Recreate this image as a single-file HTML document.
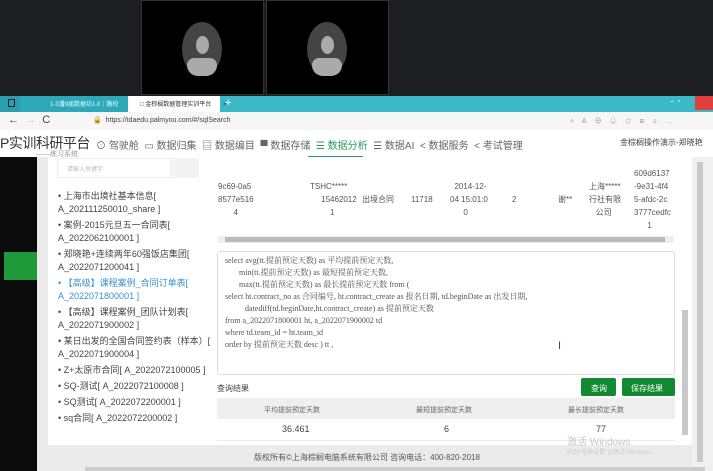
<!DOCTYPE html>
<html><head><meta charset="utf-8"><style>
*{margin:0;padding:0;box-sizing:border-box}
body{width:713px;height:471px;overflow:hidden;background:#1d1e21;font-family:"Liberation Sans","Noto Sans CJK SC",sans-serif;position:relative;color:#555}
.a{position:absolute}
.tile{background:#000;border:1px solid #333}
.ov{background:#444;border-radius:50%}
.t{font-size:9px;white-space:nowrap}
</style></head><body>
<div class="a" style="left:0;top:0;width:713px;height:96px;background:#1d1e21"></div>
<div class="a tile" style="left:141px;top:0;width:123px;height:95px"></div>
<div class="a tile" style="left:266px;top:0;width:123px;height:95px"></div>
<div class="a ov" style="left:182px;top:22px;width:40px;height:54px"></div>
<div class="a" style="left:196px;top:36px;width:13px;height:18px;border-radius:50%;background:#aaa"></div>
<div class="a" style="left:187px;top:58px;width:30px;height:18px;border-radius:10px 10px 15px 15px;background:#aaa"></div>
<div class="a ov" style="left:307px;top:22px;width:40px;height:54px"></div>
<div class="a" style="left:321px;top:36px;width:13px;height:18px;border-radius:50%;background:#aaa"></div>
<div class="a" style="left:312px;top:58px;width:30px;height:18px;border-radius:10px 10px 15px 15px;background:#aaa"></div>

<!-- tab bar -->
<div class="a" style="left:0;top:96px;width:713px;height:16px;background:#3bb9c6"></div>
<div class="a" style="left:0;top:96px;width:20px;height:16px;background:#2a9fb0"></div>
<div class="a" style="left:8px;top:99px;width:7px;height:8px;border:1px solid #222"></div>
<div class="a" style="left:20px;top:96px;width:108px;height:16px;background:#2ea9ba"></div>
<div class="a t" style="left:50px;top:99px;font-size:6px;color:#dff">1-3潘9届数据坊1.0｜路校</div>
<div class="a" style="left:128px;top:96px;width:92px;height:16px;background:#fff"></div>
<div class="a t" style="left:140px;top:99px;font-size:6px;color:#333">□ 金棕榈数据管理实训平台 &nbsp;&nbsp;&nbsp;&nbsp;&nbsp;&nbsp;×</div>
<div class="a t" style="left:225px;top:97px;font-size:11px;color:#fff">+</div>
<div class="a" style="left:695px;top:96px;width:18px;height:14px;background:#e04040"></div>
<div class="a t" style="left:670px;top:98px;font-size:7px;color:#fff">–&nbsp;&nbsp;▫</div>
<!-- address -->
<div class="a" style="left:0;top:112px;width:713px;height:18px;background:#f6f6f6"></div>
<div class="a t" style="left:8px;top:114px;font-size:11px;color:#444">←&nbsp;&nbsp;<span style="color:#ccc">→</span>&nbsp;&nbsp;C</div>
<div class="a t" style="left:93px;top:116px;font-size:7px;color:#444">🔒&nbsp;&nbsp;https://tdaedu.palmyou.com/#/sqlSearch</div>
<div class="a t" style="left:570px;top:116px;font-size:7px;color:#999;letter-spacing:8px">⌕A⊕♧☆⊞♙…</div>
<!-- nav -->
<div class="a" style="left:0;top:130px;width:713px;height:27px;background:#fff"></div>
<div class="a t" style="left:0;top:133px;font-size:14px;color:#333;letter-spacing:-0.5px">P实训科研平台</div>
<div class="a t" style="left:36px;top:149px;font-size:7px;color:#999">——练习系统</div>
<div class="a t" style="left:96px;top:137px;font-size:10px;color:#666;letter-spacing:0px">⊙ 驾驶舱 &nbsp;▭ 数据归集 &nbsp;▤ 数据编目 &nbsp;▀ 数据存储 &nbsp;<span style="color:#2a9d5a">☰ 数据分析</span> &nbsp;☰ 数据AI &nbsp;&lt; 数据服务 &nbsp;&lt; 考试管理</div>
<div class="a" style="left:308px;top:156px;width:55px;height:2px;background:#2a9d5a"></div>
<div class="a t" style="left:620px;top:137px;font-size:8px;color:#444">金棕榈操作演示-郑晓艳</div>

<!-- body -->
<div class="a" style="left:0;top:157px;width:37px;height:314px;background:#0b0b0b"></div>
<div class="a" style="left:4px;top:252px;width:33px;height:28px;background:#1f9a3a"></div>
<div class="a" style="left:37px;top:157px;width:676px;height:314px;background:#ebebeb"></div>
<div class="a" style="left:48px;top:157px;width:644px;height:288px;background:#fff"></div>
<div class="a" style="left:692px;top:157px;width:21px;height:314px;background:#f0f0f0"></div>
<div class="a" style="left:697px;top:162px;width:6px;height:300px;background:#c8c8c8"></div>
<div class="a" style="left:682px;top:310px;width:6px;height:125px;background:#c8c8c8"></div>

<!-- sidebar -->
<div class="a" style="left:57px;top:158px;width:114px;height:20px;border:1px solid #eee"></div>
<div class="a" style="left:171px;top:158px;width:28px;height:20px;background:#f3f3f3"></div>
<div class="a t" style="left:67px;top:164px;font-size:6px;color:#bbb">请输入关键字</div>
<div class="a" style="left:58px;top:190px;font-size:9px;line-height:13px;color:#444;white-space:nowrap">
<div style="margin-bottom:3px">• 上海市出境社基本信息[<br>A_202111250010_share ]</div>
<div style="margin-bottom:3px">• 案例-2015元旦五一合同表[<br>A_2022062100001 ]</div>
<div style="margin-bottom:3px">• 郑晓艳+连续两年60强饭店集团[<br>A_2022071200041 ]</div>
<div style="margin-bottom:3px;color:#3a8fd0">• 【高级】课程案例_合同订单表[<br>A_2022071800001 ]</div>
<div style="margin-bottom:3px">• 【高级】课程案例_团队计划表[<br>A_2022071900002 ]</div>
<div style="margin-bottom:3px">• 某日出发的全国合同签约表（样本）[<br>A_2022071900004 ]</div>
<div style="margin-bottom:3px">• Z+太原市合同[ A_2022072100005 ]</div>
<div style="margin-bottom:3px">• SQ-测试[ A_2022072100008 ]</div>
<div style="margin-bottom:3px">• SQ测试[ A_2022072200001 ]</div>
<div>• sq合同[ A_2022072200002 ]</div>
</div>

<!-- data table -->
<div class="a" style="left:218px;top:180px;font-size:8px;line-height:13px;color:#555">
<div class="a t" style="left:0;top:0;font-size:8px">9c69-0a5<br>8577e516<br>&nbsp;&nbsp;&nbsp;&nbsp;&nbsp;&nbsp;&nbsp;4</div>
<div class="a t" style="left:92px;top:0;font-size:8px">TSHC*****<br>&nbsp;&nbsp;&nbsp;&nbsp;&nbsp;15462012<br>&nbsp;&nbsp;&nbsp;&nbsp;&nbsp;&nbsp;&nbsp;&nbsp;&nbsp;1</div>
<div class="a t" style="left:144px;top:13px;font-size:8px">出境合同</div>
<div class="a t" style="left:193px;top:13px;font-size:8px">11718</div>
<div class="a t" style="left:232px;top:0;font-size:8px">&nbsp;&nbsp;2014-12-<br>04 15:01:0<br>&nbsp;&nbsp;&nbsp;&nbsp;&nbsp;&nbsp;0</div>
<div class="a t" style="left:294px;top:13px;font-size:8px">2</div>
<div class="a t" style="left:340px;top:13px;font-size:8px">谢**</div>
<div class="a t" style="left:371px;top:0;font-size:8px">上海*****<br>行社有限<br>&nbsp;&nbsp;&nbsp;公司</div>
<div class="a t" style="left:416px;top:-13px;font-size:8px">609d6137<br>-9e31-4f4<br>5-afdc-2c<br>3777cedfc<br>&nbsp;&nbsp;&nbsp;&nbsp;&nbsp;&nbsp;1</div>
</div>
<div class="a" style="left:218px;top:236px;width:456px;height:7px;background:#eee"></div>
<div class="a" style="left:225px;top:237px;width:440px;height:5px;background:#bbb"></div>

<!-- sql -->
<div class="a" style="left:217px;top:251px;width:458px;height:124px;border:1px solid #ddd;border-radius:3px"></div>
<div class="a" style="left:225px;top:255px;font-size:8px;line-height:12px;color:#555;font-family:'Liberation Serif','Noto Serif CJK SC',serif;white-space:pre">select avg(tt.提前预定天数) as 平均提前预定天数,
       min(tt.提前预定天数) as 最短提前预定天数,
       max(tt.提前预定天数) as 最长提前预定天数 from (
select ht.contract_no as 合同编号, ht.contract_create as 报名日期, td.beginDate as 出发日期,
          datediff(td.beginDate,ht.contract_create) as 提前预定天数
from a_2022071800001 ht, a_2022071900002 td
where td.team_id = ht.team_id
order by 提前预定天数 desc ) tt ,</div>
<div class="a t" style="left:558px;top:340px;font-size:11px;color:#444">I</div>
<div class="a t" style="left:217px;top:383px;font-size:8px;color:#444">查询结果</div>
<div class="a" style="left:581px;top:378px;width:35px;height:18px;background:#138a32;border-radius:2px"></div>
<div class="a t" style="left:591px;top:383px;font-size:8px;color:#fff">查询</div>
<div class="a" style="left:622px;top:378px;width:53px;height:18px;background:#138a32;border-radius:2px"></div>
<div class="a t" style="left:631px;top:383px;font-size:8px;color:#fff">保存结果</div>
<div class="a" style="left:217px;top:398px;width:458px;height:21px;background:#efefef"></div>
<div class="a t" style="left:264px;top:405px;font-size:7px;color:#666">平均提前预定天数</div>
<div class="a t" style="left:416px;top:405px;font-size:7px;color:#666">最短提前预定天数</div>
<div class="a t" style="left:568px;top:405px;font-size:7px;color:#666">最长提前预定天数</div>
<div class="a" style="left:217px;top:440px;width:458px;height:1px;background:#eee"></div>
<div class="a t" style="left:282px;top:424px;font-size:9px;color:#444">36.461</div>
<div class="a t" style="left:444px;top:424px;font-size:9px;color:#444">6</div>
<div class="a t" style="left:596px;top:424px;font-size:9px;color:#444">77</div>
<div class="a t" style="left:567px;top:433px;font-size:10px;color:#c8c8c8">激活 Windows</div>
<div class="a t" style="left:567px;top:447px;font-size:6px;color:#ccc">转到"电脑设置"以激活 Windows。</div>
<div class="a t" style="left:254px;top:452px;font-size:8px;color:#555">版权所有©上海棕榈电脑系统有限公司 咨询电话：400-820-2018</div>
<div class="a" style="left:85px;top:467px;width:620px;height:4px;background:#ccc"></div>
</body></html>
